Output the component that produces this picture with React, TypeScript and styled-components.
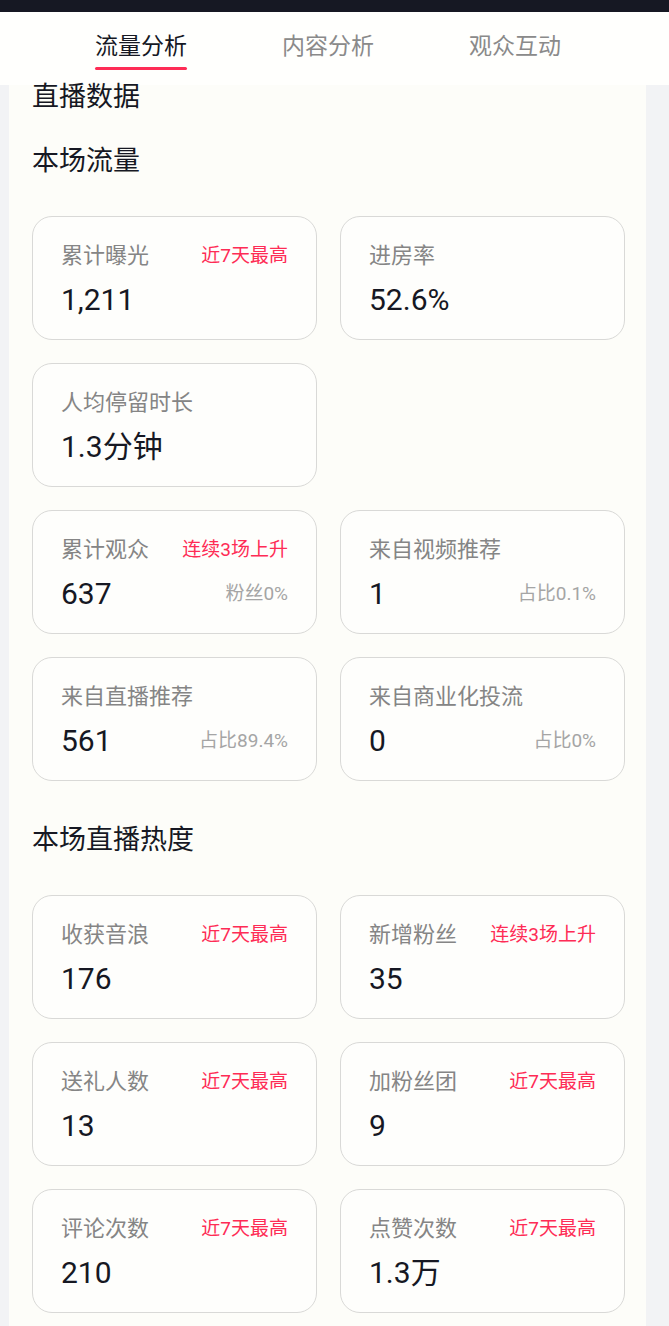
import styled, { createGlobalStyle } from "styled-components";

const GlobalStyle = createGlobalStyle`
  html, body {
    margin: 0;
    padding: 0;
    background: #f2f3f5;
    font-family: Roboto, "Noto Sans CJK SC", sans-serif;
  }
  * {
    box-sizing: border-box;
  }
`;

const StatusBar = styled.div`
  height: 12px;
  background: #161823;
`;

const TabBar = styled.nav`
  height: 73px;
  background: #fffffd;
  display: flex;
  justify-content: center;
  padding-right: 13px;
`;

const Tab = styled.div<{ $active?: boolean }>`
  width: 187px;
  display: flex;
  justify-content: center;
  align-items: flex-start;
  padding-top: 21px;
  font-size: 23px;
  line-height: 28px;
  color: ${(p) => (p.$active ? "#161823" : "#8a8a8a")};
`;

const TabLabel = styled.span<{ $active?: boolean }>`
  position: relative;
  &::after {
    content: "";
    display: ${(p) => (p.$active ? "block" : "none")};
    position: absolute;
    left: 0;
    right: 0;
    top: 34px;
    height: 3px;
    border-radius: 2px;
    background: #fe2c55;
  }
`;

const Panel = styled.main`
  margin: 0 23px 0 9px;
  background: #fdfdf9;
  padding: 0 21px 20px 23px;
`;

const PageTitle = styled.h2`
  margin: 0;
  font-size: 27px;
  font-weight: 400;
  line-height: 24px;
  color: #161823;
`;

const SectionTitle = styled.h3<{ $top: number; $bottom: number }>`
  margin: ${(p) => p.$top}px 0 ${(p) => p.$bottom}px;
  font-size: 27px;
  font-weight: 400;
  line-height: 30px;
  color: #161823;
`;

const Grid = styled.div`
  display: grid;
  grid-template-columns: 285px 285px;
  column-gap: 23px;
  row-gap: 23px;
`;

const Card = styled.div`
  height: 124px;
  border: 1px solid #d9d9d7;
  border-radius: 20px;
  background: #fefefc;
  padding: 27px 28px 0 28px;
  display: flex;
  flex-direction: column;
`;

const Row = styled.div`
  display: flex;
  justify-content: space-between;
  align-items: center;
`;

const Label = styled.span`
  font-size: 22px;
  line-height: 24px;
  color: #858585;
`;

const Tag = styled.span`
  font-size: 19px;
  line-height: 24px;
  color: #fe2c55;
`;

const Value = styled.span`
  margin-top: 16px;
  font-size: 30px;
  line-height: 32px;
  color: #161823;
`;

const ValueRow = styled(Row)`
  margin-top: 16px;
  ${Value} {
    margin-top: 0;
  }
`;

const Sub = styled.span`
  font-size: 19px;
  line-height: 24px;
  color: #a5a5a5;
`;

interface Stat {
  label: string;
  value: string;
  tag?: string;
  sub?: string;
}

const traffic: (Stat | null)[] = [
  { label: "累计曝光", value: "1,211", tag: "近7天最高" },
  { label: "进房率", value: "52.6%" },
  { label: "人均停留时长", value: "1.3分钟" },
  null,
  { label: "累计观众", value: "637", tag: "连续3场上升", sub: "粉丝0%" },
  { label: "来自视频推荐", value: "1", sub: "占比0.1%" },
  { label: "来自直播推荐", value: "561", sub: "占比89.4%" },
  { label: "来自商业化投流", value: "0", sub: "占比0%" },
];

const heat: Stat[] = [
  { label: "收获音浪", value: "176", tag: "近7天最高" },
  { label: "新增粉丝", value: "35", tag: "连续3场上升" },
  { label: "送礼人数", value: "13", tag: "近7天最高" },
  { label: "加粉丝团", value: "9", tag: "近7天最高" },
  { label: "评论次数", value: "210", tag: "近7天最高" },
  { label: "点赞次数", value: "1.3万", tag: "近7天最高" },
];

function StatCard({ stat }: { stat: Stat }) {
  return (
    <Card>
      <Row>
        <Label>{stat.label}</Label>
        {stat.tag && <Tag>{stat.tag}</Tag>}
      </Row>
      {stat.sub ? (
        <ValueRow>
          <Value>{stat.value}</Value>
          <Sub>{stat.sub}</Sub>
        </ValueRow>
      ) : (
        <Value>{stat.value}</Value>
      )}
    </Card>
  );
}

function App() {
  const tabs = ["流量分析", "内容分析", "观众互动"];
  return (
    <>
      <GlobalStyle />
      <StatusBar />
      <TabBar>
        {tabs.map((t, i) => (
          <Tab key={t} $active={i === 0}>
            <TabLabel $active={i === 0}>{t}</TabLabel>
          </Tab>
        ))}
      </TabBar>
      <Panel>
        <PageTitle>直播数据</PageTitle>
        <SectionTitle $top={37} $bottom={40}>
          本场流量
        </SectionTitle>
        <Grid>
          {traffic.map((s, i) =>
            s ? <StatCard key={s.label} stat={s} /> : <div key={i} />
          )}
        </Grid>
        <SectionTitle $top={44} $bottom={40}>
          本场直播热度
        </SectionTitle>
        <Grid>
          {heat.map((s) => (
            <StatCard key={s.label} stat={s} />
          ))}
        </Grid>
      </Panel>
    </>
  );
}

export default App;
